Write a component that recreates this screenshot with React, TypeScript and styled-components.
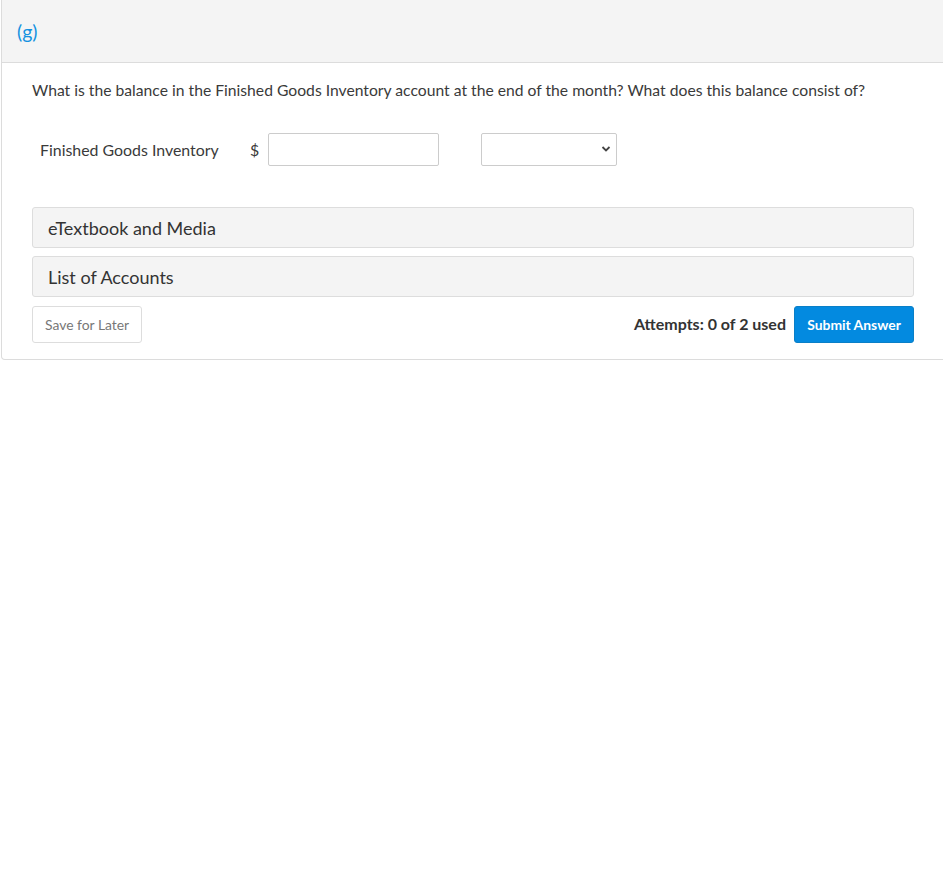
import styled, { createGlobalStyle } from "styled-components";

const GlobalStyle = createGlobalStyle`
    html, body {
        margin: 0;
        padding: 0;
        background: #ffffff;
        overflow-x: hidden;
    }
    body {
        font-family: Lato, "Liberation Sans", sans-serif;
        color: #333333;
    }
`;

const DivPanel = styled.div`
    width: 946px;
    margin-left: 1px;
    border: 1px solid #dcdcdc;
    border-top: none;
    border-radius: 0 0 4px 4px;
    background-color: #ffffff;
`;

const DivPanelHeader = styled.div`
    display: flex;
    align-items: center;
    height: 62px;
    padding-left: 15px;
    background-color: #f4f4f4;
    border-bottom: 1px solid #dcdcdc;
    color: #1592e0;
    font-size: 19.5px;
`;

const DivPanelBody = styled.div`
    padding: 17px 34px 16px 30px;
`;

const PQuestion = styled.p`
    margin: 0;
    font-size: 15.7px;
    line-height: 21px;
    color: #3a3a3a;
`;

const DivAnswerRow = styled.div`
    display: flex;
    align-items: center;
    margin-top: 32px;
    padding-left: 8px;
`;

const SpanLabel = styled.span`
    width: 210px;
    font-size: 15.9px;
    color: #3a3a3a;
`;

const SpanCurrency = styled.span`
    width: 18px;
    font-size: 15.9px;
    color: #3a3a3a;
`;

const InputAmount = styled.input`
    box-sizing: border-box;
    width: 171px;
    height: 33px;
    border: 1px solid #cccccc;
    border-radius: 2px;
    margin-right: 42px;
`;

const SelectWrap = styled.div`
    position: relative;
    width: 136px;
    height: 33px;
`;

const SelectBox = styled.select`
    box-sizing: border-box;
    width: 100%;
    height: 100%;
    border: 1px solid #cccccc;
    border-radius: 2px;
    background: #ffffff;
    appearance: none;
`;

const SpanChevron = styled.span`
    position: absolute;
    right: 6px;
    top: 11px;
    pointer-events: none;
    display: flex;
`;

const DivAccordion = styled.div`
    display: flex;
    flex-direction: column;
    gap: 8px;
    margin-top: 41px;
`;

const DivAccordionItem = styled.div`
    box-sizing: border-box;
    height: 41px;
    display: flex;
    align-items: center;
    padding-left: 15px;
    background-color: #f4f4f4;
    border: 1px solid #dddddd;
    border-radius: 3px;
    font-size: 18px;
    color: #333333;
`;

const DivFooter = styled.div`
    display: flex;
    align-items: center;
    margin-top: 9px;
`;

const ButtonSave = styled.button`
    box-sizing: border-box;
    height: 37px;
    padding: 0 12px;
    border: 1px solid #dddddd;
    border-radius: 3px;
    background: #ffffff;
    color: #777777;
    font-family: Lato, "Liberation Sans", sans-serif;
    font-size: 13.9px;
`;

const SpanAttempts = styled.span`
    margin-left: auto;
    margin-right: 8px;
    font-size: 16px;
    font-weight: 700;
    color: #333333;
    position: relative;
    top: -1px;
`;

const ButtonSubmit = styled.button`
    box-sizing: border-box;
    height: 37px;
    width: 120px;
    border: 1px solid #0a7fc7;
    border-radius: 3px;
    background-color: #038ae0;
    color: #ffffff;
    font-family: Lato, "Liberation Sans", sans-serif;
    font-size: 13.9px;
    font-weight: 700;
`;

const App = () => {
    return (
        <>
            <GlobalStyle />
            <DivPanel>
                <DivPanelHeader>(g)</DivPanelHeader>
                <DivPanelBody>
                    <PQuestion>
                        What is the balance in the Finished Goods Inventory
                        account at the end of the month? What does this balance
                        consist of?
                    </PQuestion>
                    <DivAnswerRow>
                        <SpanLabel>Finished Goods Inventory</SpanLabel>
                        <SpanCurrency>$</SpanCurrency>
                        <InputAmount type="text" />
                        <SelectWrap>
                            <SelectBox defaultValue="">
                                <option value=""></option>
                            </SelectBox>
                            <SpanChevron>
                                <svg width="10" height="10" viewBox="0 0 10 10">
                                    <path
                                        d="M1.5 3 L5 6.5 L8.5 3"
                                        fill="none"
                                        stroke="#444"
                                        strokeWidth="1.8"
                                    />
                                </svg>
                            </SpanChevron>
                        </SelectWrap>
                    </DivAnswerRow>
                    <DivAccordion>
                        <DivAccordionItem>eTextbook and Media</DivAccordionItem>
                        <DivAccordionItem>List of Accounts</DivAccordionItem>
                    </DivAccordion>
                    <DivFooter>
                        <ButtonSave>Save for Later</ButtonSave>
                        <SpanAttempts>Attempts: 0 of 2 used</SpanAttempts>
                        <ButtonSubmit>Submit Answer</ButtonSubmit>
                    </DivFooter>
                </DivPanelBody>
            </DivPanel>
        </>
    );
};

export default App;
